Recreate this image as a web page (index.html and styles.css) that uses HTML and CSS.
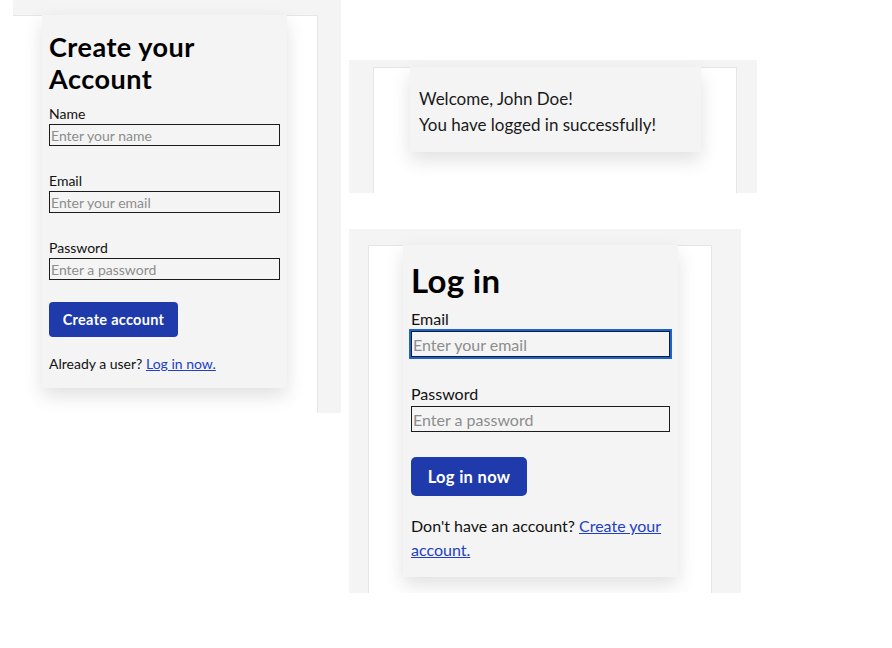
FILE: index.html
```html
<!DOCTYPE html>
<html lang="en">
<head>
<meta charset="utf-8">
<title>Account screens</title>
<link rel="stylesheet" href="styles.css">
</head>
<body>
<div class="canvas">
  <section class="shot shot-signup">
    <div class="page page-signup">
      <div class="card card-sm">
        <h1 class="title title-sm">Create your Account</h1>
        <label class="field-label">Name</label>
        <input class="field" type="text" placeholder="Enter your name">
        <label class="field-label gap">Email</label>
        <input class="field" type="email" placeholder="Enter your email">
        <label class="field-label gap">Password</label>
        <input class="field" type="password" placeholder="Enter a password">
        <button class="btn" type="button">Create account</button>
        <p class="note">Already a user? <a href="#">Log in now.</a></p>
      </div>
    </div>
  </section>

  <section class="shot shot-welcome">
    <div class="page page-welcome">
      <div class="card card-welcome">
        <p class="welcome-line">Welcome, John Doe!</p>
        <p class="welcome-line">You have logged in successfully!</p>
      </div>
    </div>
  </section>

  <section class="shot shot-login">
    <div class="page page-login">
      <div class="card card-lg">
        <h1 class="title title-lg">Log in</h1>
        <label class="field-label">Email</label>
        <input class="field field-focus" type="email" placeholder="Enter your email">
        <label class="field-label gap">Password</label>
        <input class="field" type="password" placeholder="Enter a password">
        <button class="btn" type="button">Log in now</button>
        <p class="note">Don't have an account? <a href="#">Create your</a><br><a href="#">account.</a></p>
      </div>
    </div>
  </section>
</div>
</body>
</html>
```
FILE: styles.css
```css
html, body {
  margin: 0;
  padding: 0;
  background: #ffffff;
}
body {
  font-family: "Segoe UI", Lato, "Noto Sans", sans-serif;
  color: #111111;
}
.canvas {
  position: relative;
  width: 892px;
  height: 648px;
  overflow: hidden;
}

/* screenshot panels placed on the collage canvas */
.shot {
  position: absolute;
  background: #f4f4f4;
  display: flex;
  box-sizing: border-box;
  overflow: hidden;
}
.shot-signup {
  left: 13px;
  top: 0;
  width: 328px;
  height: 413px;
  padding: 15px 23px 0 0;
}
.shot-welcome {
  left: 349px;
  top: 60px;
  width: 408px;
  height: 133px;
  padding: 7px 20px 0 24px;
}
.shot-login {
  left: 349px;
  top: 229px;
  width: 392px;
  height: 364px;
  padding: 16px 29px 0 19px;
}

.page {
  flex: 1;
  background: #ffffff;
  border-top: 1px solid #e6e6e6;
  border-right: 1px solid #e6e6e6;
  display: flex;
  align-items: flex-start;
}
.page-welcome,
.page-login {
  border-left: 1px solid #e6e6e6;
}
.page-signup { padding-left: 29px; }
.page-welcome { padding-left: 36px; }
.page-login { padding-left: 34px; }

.card {
  background: #f4f4f4;
  box-shadow: 0 8px 18px rgba(0, 0, 0, 0.12);
  display: flex;
  flex-direction: column;
  align-items: flex-start;
  box-sizing: border-box;
  margin-top: -1px;
}

/* sign-up card (smaller scale) */
.card-sm {
  width: 245px;
  padding: 16px 7px 14px;
  font-size: 14px;
}
.card-sm .field-label { line-height: 19px; }
.card-sm .field-label.gap { margin-top: 25px; }
.card-sm .field { height: 22px; font-size: 14px; }
.card-sm .btn {
  height: 35px;
  width: 129px;
  margin-top: 22px;
  font-size: 14.5px;
  border-radius: 4px;
}
.card-sm .note { margin-top: 17px; line-height: 20px; }

/* log-in card */
.card-lg {
  width: 275px;
  padding: 16px 8px 15px;
  font-size: 16px;
}
.card-lg .field-label { line-height: 22px; }
.card-lg .field-label.gap { margin-top: 26px; }
.card-lg .field { height: 26px; font-size: 16px; }
.card-lg .btn {
  height: 39px;
  width: 116px;
  margin-top: 25px;
  font-size: 16.5px;
  border-radius: 5px;
}
.card-lg .note { margin-top: 18px; line-height: 24px; }

/* welcome card */
.card-welcome {
  width: 291px;
  padding: 19px 9px 14px;
  font-size: 17px;
  line-height: 26px;
}
.welcome-line {
  margin: 0;
  color: #1a1a1a;
}

.title {
  margin: 0;
  font-weight: 700;
  color: #000000;
}
.title-sm {
  font-size: 27px;
  line-height: 32px;
  letter-spacing: 0.5px;
}
.title-lg {
  font-size: 33px;
  line-height: 38px;
  letter-spacing: 0.3px;
}

.field-label {
  display: block;
  color: #111111;
  margin-top: 9px;
}
.field {
  display: block;
  box-sizing: border-box;
  width: 100%;
  margin: 1px 0 0;
  padding: 0 1px;
  border: 1px solid #1c1c1c;
  background: transparent;
  font-family: inherit;
  color: #111111;
  outline: none;
}
.field::placeholder {
  color: #8d8d8d;
}
.field-focus {
  outline: 2px solid #1565d8;
  outline-offset: 0;
}

.btn {
  border: none;
  padding: 0;
  background: #1f3bab;
  color: #ffffff;
  font-family: inherit;
  font-weight: 700;
  letter-spacing: 0.3px;
  text-align: center;
  cursor: pointer;
}

.note {
  margin-bottom: 0;
  color: #111111;
}
.note a {
  color: #2340c4;
  text-decoration: underline;
}
```
